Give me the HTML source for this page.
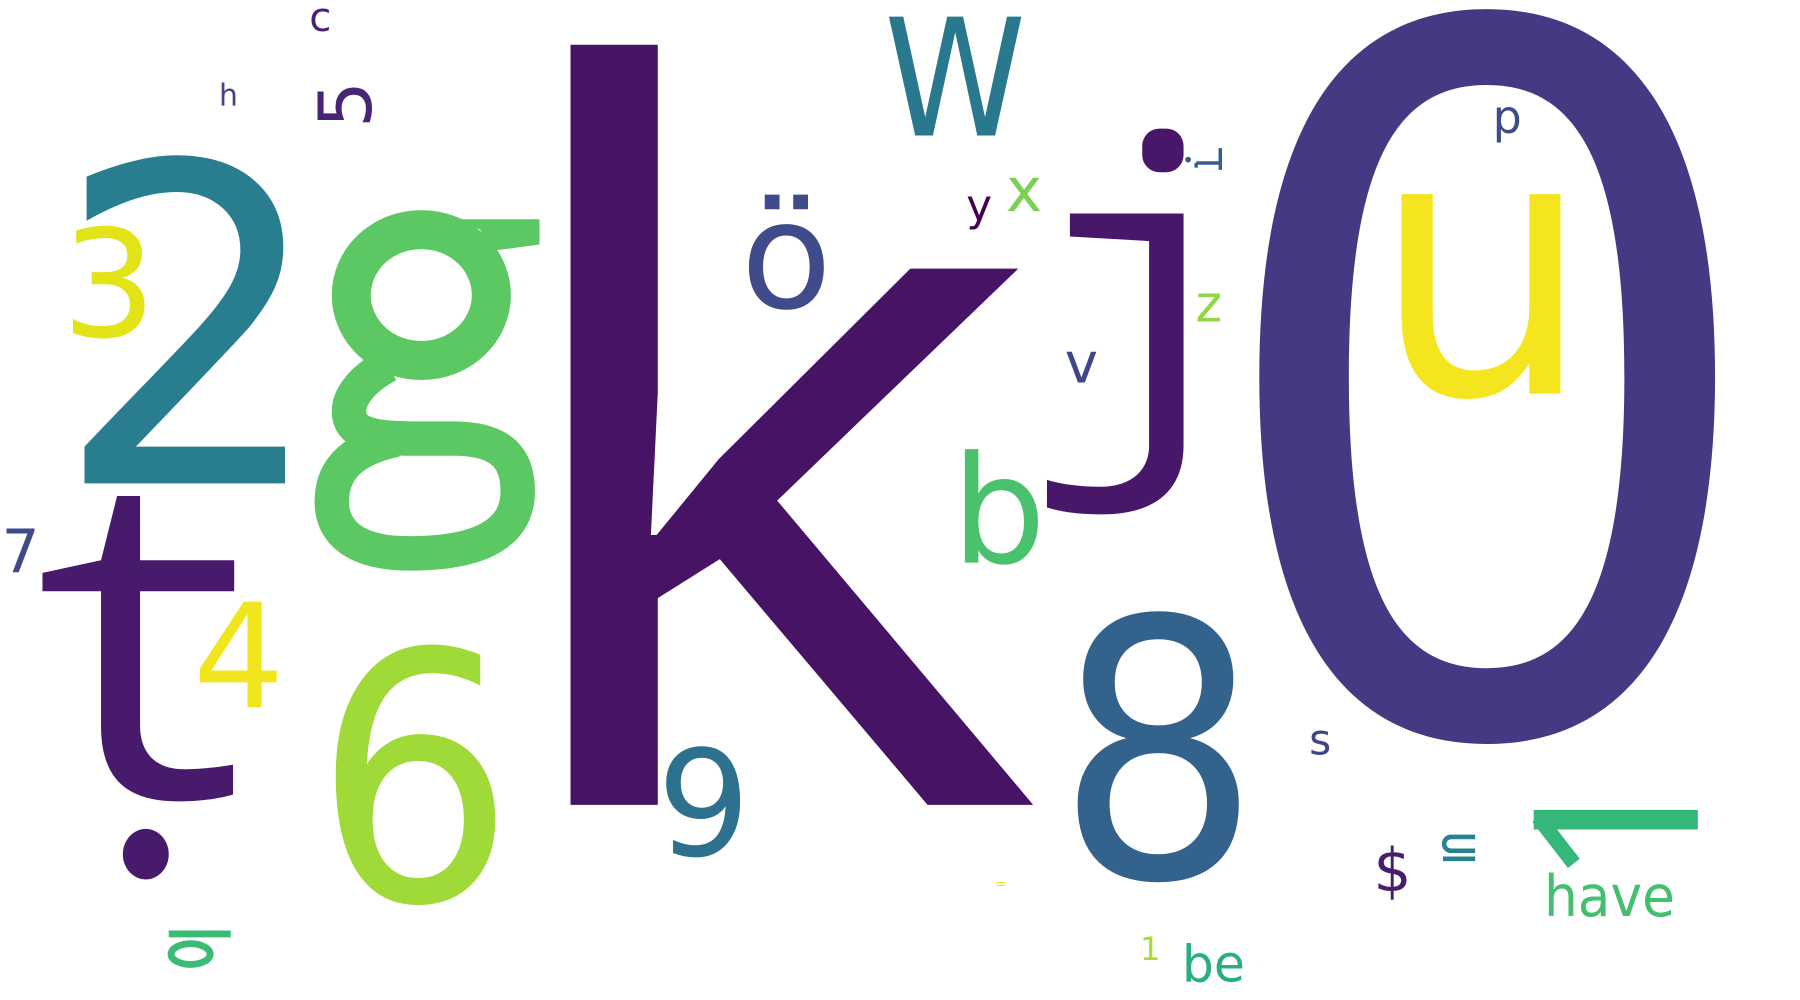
<!DOCTYPE html>
<html><head><meta charset="utf-8"><style>
html,body{margin:0;padding:0;background:#fff;width:1800px;height:1000px;overflow:hidden}
svg{display:block}
text{font-family:"DejaVu Sans","Liberation Sans",sans-serif}
</style></head><body>
<svg width="1800" height="1000" viewBox="0 0 1568 871" preserveAspectRatio="none" xmlns="http://www.w3.org/2000/svg">
<polygon fill="#471365" points="497,39 573,39 573,342 567,466 572,466 626,400 793,234 887,234 677,436 900,701 808,701 627,487 573,521 573,701 497,701"/>
<path fill="#443983" fill-rule="evenodd" d="M1295,8 C1420,8 1494,110 1494,328 C1494,546 1420,648 1295,648 C1170,648 1097,546 1097,328 C1097,110 1170,8 1295,8 Z M1295,74 C1220,74 1175,135 1175,328 C1175,521 1220,582 1295,582 C1370,582 1415,521 1415,328 C1415,135 1370,74 1295,74 Z"/>
<text transform="translate(1291,343) scale(0.95,1)" font-size="318" fill="#f5e51f" text-anchor="middle">u</text>
<text transform="translate(166,421) scale(0.98,1)" font-size="385" fill="#287d8e" text-anchor="middle">2</text>
<g fill="none" stroke="#5cc863">
<ellipse cx="367" cy="257" rx="61" ry="57" stroke-width="34"/>
<path d="M338,318 C312,332 304,348 304,358 C304,378 325,382 360,382 L395,382" stroke-width="30"/>
<path d="M395,382 C440,382 451,402 451,428 C451,468 412,482 357,482 C310,482 289,464 289,437 C289,405 312,390 345,383" stroke-width="30"/>
</g>
<polygon fill="#5cc863" points="397,191 470,191 470,213 432,218 418,200"/>
<path fill="#481a6c" d="M102,432 H122 V488 H204 V515 H122 V632 C122,655 135,670 160,670 C175,670 192,668 203,666 V692 C190,696 172,698 155,698 C110,698 88,678 88,632 V515 H37 V499 L88,488 Z"/>
<ellipse cx="127" cy="744" rx="20" ry="22" fill="#481a6c"/>
<path fill="#481769" d="M932,186 H1031 V388 C1031,428 1005,448 960,448 C940,448 925,446 912,442 V418 C925,422 942,424 958,424 C985,424 1001,410 1001,388 V210 L932,206 Z"/>
<rect x="995" y="112" width="36" height="38" rx="15" fill="#481769"/>
<circle cx="1035" cy="139" r="2.5" fill="#355e8d"/>
<path d="M1042,142 V146 M1042,142 H1063 M1063,129 V148" stroke="#355e8d" stroke-width="3" fill="none"/>
<text transform="translate(1009,764) scale(0.9,1)" font-size="312" fill="#33638d" text-anchor="middle">8</text>
<text transform="translate(361,784) scale(0.92,1)" font-size="300" fill="#a0da39" text-anchor="middle">6</text>
<text x="685" y="268" font-size="130" fill="#3f4b8a" text-anchor="middle">ö</text>
<text x="870" y="490" font-size="130" fill="#4ac16d" text-anchor="middle">b</text>
<text transform="translate(832,118) scale(0.88,1)" font-size="142" fill="#2a788e" text-anchor="middle">W</text>
<text x="95" y="293" font-size="130" fill="#e2e418" text-anchor="middle">3</text>
<text x="208" y="616" font-size="126" fill="#f1e51d" text-anchor="middle">4</text>
<text x="613" y="745" font-size="128" fill="#2c728e" text-anchor="middle">9</text>
<text x="18" y="498" font-size="52" fill="#3e4a89" text-anchor="middle">7</text>
<text x="279" y="27" font-size="35" fill="#482173" text-anchor="middle">c</text>
<text x="199" y="92" font-size="26" fill="#414487" text-anchor="middle">h</text>
<text transform="translate(302,91) rotate(-90)" font-size="64" fill="#482475" text-anchor="middle" dominant-baseline="central">5</text>
<text x="853" y="192" font-size="38" fill="#440154" text-anchor="middle">y</text>
<text x="892" y="184" font-size="53" fill="#7ad151" text-anchor="middle">x</text>
<text x="1053" y="280" font-size="44" fill="#8fd744" text-anchor="middle">z</text>
<text x="942" y="333" font-size="49" fill="#404688" text-anchor="middle">v</text>
<text x="1313" y="116" font-size="40" fill="#3e4c8a" text-anchor="middle">p</text>
<text x="1150" y="657" font-size="37" fill="#3f4788" text-anchor="middle">s</text>
<text x="1213" y="776" font-size="52" fill="#471e6c" text-anchor="middle">$</text>
<path d="M1285,729 H1264 A5,5 0 0 0 1264,741 H1285 M1257,748 H1285" stroke="#26828e" stroke-width="4" fill="none"/>
<path d="M1336,714 H1479" stroke="#35b779" stroke-width="17" fill="none"/>
<path d="M1340,712 L1371,752" stroke="#35b779" stroke-width="13" fill="none"/>
<text transform="translate(1402,798) scale(0.93,1)" font-size="50" fill="#44bf70" text-anchor="middle">have</text>
<text x="1057" y="855" font-size="44" fill="#29af7f" text-anchor="middle">be</text>
<text x="1002" y="836" font-size="28" fill="#a8db34" text-anchor="middle">1</text>
<text x="872" y="774" font-size="12" fill="#f2e51d" text-anchor="middle">=</text>
<path d="M147,813.5 H201" stroke="#3bbb75" stroke-width="6" fill="none"/>
<ellipse cx="166" cy="831" rx="17" ry="9" stroke="#3bbb75" stroke-width="6" fill="none"/>
</svg>
</body></html>
